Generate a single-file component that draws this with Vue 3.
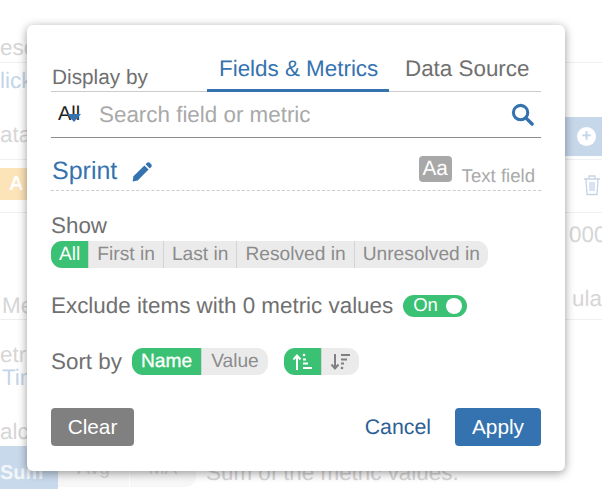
<script setup>
const showOptions = ['All', 'First in', 'Last in', 'Resolved in', 'Unresolved in'];
</script>

<template>
  <div class="page">
    <div class="backdrop">
      <span class="bg-text" style="left: 0; top: 36px">esc</span>
      <i class="bg-line" style="top: 62px"></i>
      <span class="bg-text bg-link" style="left: 0; top: 69px">lick</span>
      <span class="bg-text" style="left: 0; top: 123px">ata</span>
      <i class="bg-line" style="top: 159px"></i>
      <span class="bg-chip">A</span>
      <i class="bg-line" style="top: 212px"></i>
      <span class="bg-text" style="left: 2px; top: 294px">Me</span>
      <i class="bg-line" style="top: 319px"></i>
      <span class="bg-text" style="left: 0; top: 343px">etri</span>
      <span class="bg-text bg-link" style="left: 2px; top: 366px">Tim</span>
      <span class="bg-text" style="left: 0; top: 420px">alc</span>
      <span class="bg-sum">Sum</span>
      <span class="bg-tab">Avg</span>
      <span class="bg-tab bg-tab-ma">MA</span>
      <span class="bg-text" style="left: 206px; top: 461px">Sum of the metric values.</span>
      <span class="bg-add"><b>+</b></span>
      <svg class="bg-trash" viewBox="0 0 18 22" width="18" height="22" fill="none" stroke="#c5d5e8" stroke-width="1.3">
        <path d="M1 5h16M6 5V2h6v3M3 5l1 15.500h10L15 5M7 8v9M9 8v9M11 8v9" />
      </svg>
      <span class="bg-text" style="left: 569px; top: 223px">000</span>
      <span class="bg-text" style="left: 572px; top: 287px">ula</span>
    </div>

    <section class="dialog">
      <header class="head">
        <span class="head-label">Display by</span>
        <nav class="tabs">
          <span class="tab tab-active">Fields &amp; Metrics</span>
          <span class="tab">Data Source</span>
        </nav>
      </header>

      <div class="search">
        <span class="scope">All<i class="scope-arrow"></i></span>
        <span class="placeholder">Search field or metric</span>
        <svg class="search-icon" viewBox="0 0 24 24" width="23" height="23" fill="none" stroke="#3572b0">
          <circle cx="10" cy="10" r="7.500" stroke-width="3.200" />
          <path d="M15.500 15.500 22 22" stroke-width="3.600" stroke-linecap="round" />
        </svg>
      </div>

      <div class="field">
        <span class="field-name">Sprint</span>
        <svg class="pencil" viewBox="0 0 20 20" width="20" height="20" fill="#3572b0">
          <path d="M0.600 19.400 1.500 14.300 12.400 3.400 16.600 7.600 5.700 18.500Z" />
          <path d="M13.600 2.200 15 0.800C15.800 0 17 0 17.800 0.800L19.200 2.200C20 3 20 4.200 19.200 5L17.800 6.400Z" />
        </svg>
        <span class="field-type">
          <b class="type-badge">Aa</b>
          <span class="type-text">Text field</span>
        </span>
      </div>

      <div class="show">
        <div class="label">Show</div>
        <div class="segments show-options">
          <span
            v-for="(option, index) in showOptions"
            :key="option"
            class="segment"
            :class="{ on: index === 0 }"
          >{{ option }}</span>
        </div>
      </div>

      <div class="exclude">
        <span class="label">Exclude items with 0 metric values</span>
        <span class="toggle">On<i class="knob"></i></span>
      </div>

      <div class="sort">
        <span class="label">Sort by</span>
        <div class="segments sort-names">
          <span class="segment on strong">Name</span>
          <span class="segment">Value</span>
        </div>
        <div class="segments sort-order">
          <span class="segment on icon-seg">
            <svg viewBox="0 0 22 18" width="22" height="18" fill="none" stroke="#fff" stroke-width="2">
              <path d="M5 17V3M1.500 6.500 5 2.500l3.500 4" />
              <path d="M11 6.500h3M11 10.500h5M11 15h9" />
              <circle cx="12" cy="2" r="1.300" fill="#fff" stroke="none" />
            </svg>
          </span>
          <span class="segment icon-seg">
            <svg viewBox="0 0 22 18" width="22" height="18" fill="none" stroke="#808080" stroke-width="2">
              <path d="M5 1v14M1.500 11.500 5 15.500l3.500-4" />
              <path d="M11 2h9M11 6.500h6M11 10.500h3" />
              <circle cx="12" cy="15" r="1.300" fill="#808080" stroke="none" />
            </svg>
          </span>
        </div>
      </div>

      <footer class="foot">
        <button class="btn btn-clear">Clear</button>
        <span class="cancel">Cancel</span>
        <button class="btn btn-apply">Apply</button>
      </footer>
    </section>
  </div>
</template>

<style scoped>
.page {
  position: relative;
  width: 602px;
  height: 489px;
  overflow: hidden;
  background: #fff;
  font-family: "Liberation Sans", Arial, sans-serif;
  color: #707070;
  text-rendering: geometricPrecision;
}
.backdrop {
  position: absolute;
  inset: 0;
}
.bg-text {
  position: absolute;
  font-size: 22.400px;
  line-height: 24px;
  color: #d6d6d6;
  white-space: nowrap;
}
.bg-link {
  color: #c3d5e8;
}
.bg-line {
  position: absolute;
  left: 0;
  right: 0;
  height: 1px;
  background: #efefef;
}
.bg-chip {
  position: absolute;
  left: -10px;
  top: 168px;
  width: 50px;
  height: 32px;
  padding-left: 19px;
  box-sizing: border-box;
  background: #fde3b8;
  color: #fff;
  font-size: 20px;
  font-weight: bold;
  line-height: 32px;
  border-radius: 5px;
}
.bg-sum {
  position: absolute;
  left: 0;
  top: 446px;
  width: 58px;
  height: 43px;
  background: #c8d9ec;
  color: #f2f6fa;
  font-size: 20px;
  line-height: 54px;
  font-weight: bold;
}
.bg-tab {
  position: absolute;
  left: 58px;
  top: 446px;
  width: 71px;
  height: 30px;
  padding-top: 11px;
  background: #f7f7f7;
  text-align: center;
  color: #d8d8d8;
  font-size: 19px;
  line-height: 24px;
}
.bg-tab-ma {
  left: 130px;
  width: 66px;
  border-radius: 0 10px 10px 0;
}
.bg-add {
  position: absolute;
  left: 565px;
  top: 117px;
  width: 37px;
  height: 39px;
  background: #c6d7ea;
}
.bg-add b {
  position: absolute;
  left: 12px;
  top: 10px;
  width: 19px;
  height: 19px;
  border-radius: 50%;
  background: #fff;
  color: #c6d7ea;
  font-size: 17px;
  line-height: 18px;
  text-align: center;
}
.bg-trash {
  position: absolute;
  left: 583px;
  top: 174px;
}

.dialog {
  position: absolute;
  left: 27px;
  top: 25px;
  width: 538px;
  height: 446px;
  box-sizing: border-box;
  padding: 30px 24px 0;
  background: #fff;
  border-radius: 6px;
  box-shadow: 0 2px 10px rgba(0, 0, 0, 0.4);
}
.head {
  display: flex;
  align-items: flex-end;
  height: 36px;
  border-bottom: 1px solid #ccc;
}
.head-label {
  width: 156px;
  padding-left: 1px;
  box-sizing: border-box;
  font-size: 20.800px;
  line-height: 27px;
}
.tabs {
  display: flex;
  flex: 1;
  align-self: stretch;
}
.tab {
  font-size: 22.400px;
  line-height: 28px;
  padding-left: 16px;
  white-space: nowrap;
}
.tab-active {
  width: 182px;
  box-sizing: border-box;
  padding-left: 12px;
  color: #3572b0;
  border-bottom: 3px solid #3572b0;
  margin-bottom: -1px;
}
.search {
  display: flex;
  align-items: center;
  height: 45px;
  border-bottom: 1px solid #8c8c8c;
}
.scope {
  position: relative;
  width: 48px;
  padding-left: 7px;
  color: #222;
  font-size: 20px;
  box-sizing: border-box;
}
.scope-arrow {
  position: absolute;
  left: 16px;
  top: 11px;
  border-left: 7.500px solid transparent;
  border-right: 7.500px solid transparent;
  border-top: 8px solid #3572b0;
}
.placeholder {
  flex: 1;
  font-size: 22.400px;
  color: #a9a9a9;
}
.search-icon {
  margin-right: 7px;
}
.field {
  display: flex;
  align-items: flex-end;
  height: 53px;
  padding-bottom: 4px;
  box-sizing: border-box;
  border-bottom: 1px dashed #ccc;
}
.field-name {
  padding-left: 1px;
  color: #3572b0;
  font-size: 25px;
  line-height: 30px;
}
.pencil {
  margin: 0 0 4px 15px;
}
.field-type {
  display: flex;
  align-items: flex-start;
  margin-left: auto;
  margin-right: 6px;
}
.type-badge {
  width: 33px;
  height: 26px;
  border-radius: 4px;
  background: #a8a8a8;
  color: #fff;
  font-size: 20.800px;
  font-weight: normal;
  line-height: 25px;
  text-align: center;
}
.type-text {
  margin: 10px 0 0 10px;
  font-size: 18.600px;
  line-height: 20px;
  color: #a9a9a9;
}
.show {
  margin-top: 22px;
}
.label {
  font-size: 22.400px;
  line-height: 26px;
  white-space: nowrap;
}
.show-options {
  display: flex;
  width: fit-content;
  margin-top: 2px;
}
.segments {
  display: inline-flex;
  height: 27px;
  border-radius: 11px;
  overflow: hidden;
  background: #ebebeb;
}
.segment {
  padding: 0 8px;
  font-size: 19.200px;
  line-height: 27px;
  color: #8c8c8c;
  border-left: 1px solid #d4d4d4;
  white-space: nowrap;
}
.segment:first-child {
  border-left: 0;
}
.segment.on {
  background: #3ac173;
  color: #fff;
}
.sort-names .segment {
  padding: 0 9px;
}
.strong {
  -webkit-text-stroke: 0.3px #fff;
}
.exclude {
  display: flex;
  align-items: center;
  gap: 10px;
  margin-top: 25px;
}
.toggle {
  position: relative;
  width: 64px;
  height: 22px;
  box-sizing: border-box;
  padding-left: 10px;
  border-radius: 11px;
  background: #3ac173;
  color: #fff;
  font-size: 18.500px;
  line-height: 20px;
}
.knob {
  position: absolute;
  right: 5px;
  top: 3px;
  width: 16px;
  height: 16px;
  border-radius: 50%;
  background: #fff;
}
.sort {
  display: flex;
  align-items: center;
  margin-top: 29px;
}
.sort-names {
  margin-left: 10px;
}
.sort-order {
  margin-left: 16px;
}
.sort-order .icon-seg {
  display: flex;
  align-items: center;
  padding: 0 7px 0 8px;
}
.foot {
  display: flex;
  align-items: center;
  margin-top: 33px;
}
.btn {
  height: 38px;
  border: 0;
  border-radius: 4px;
  color: #fff;
  font-family: inherit;
  font-size: 20.800px;
}
.btn-clear {
  width: 83px;
  background: #808080;
}
.cancel {
  margin-left: auto;
  margin-right: 24px;
  color: #2d5f96;
  font-size: 21.300px;
}
.btn-apply {
  width: 86px;
  background: #3572b0;
}
</style>
